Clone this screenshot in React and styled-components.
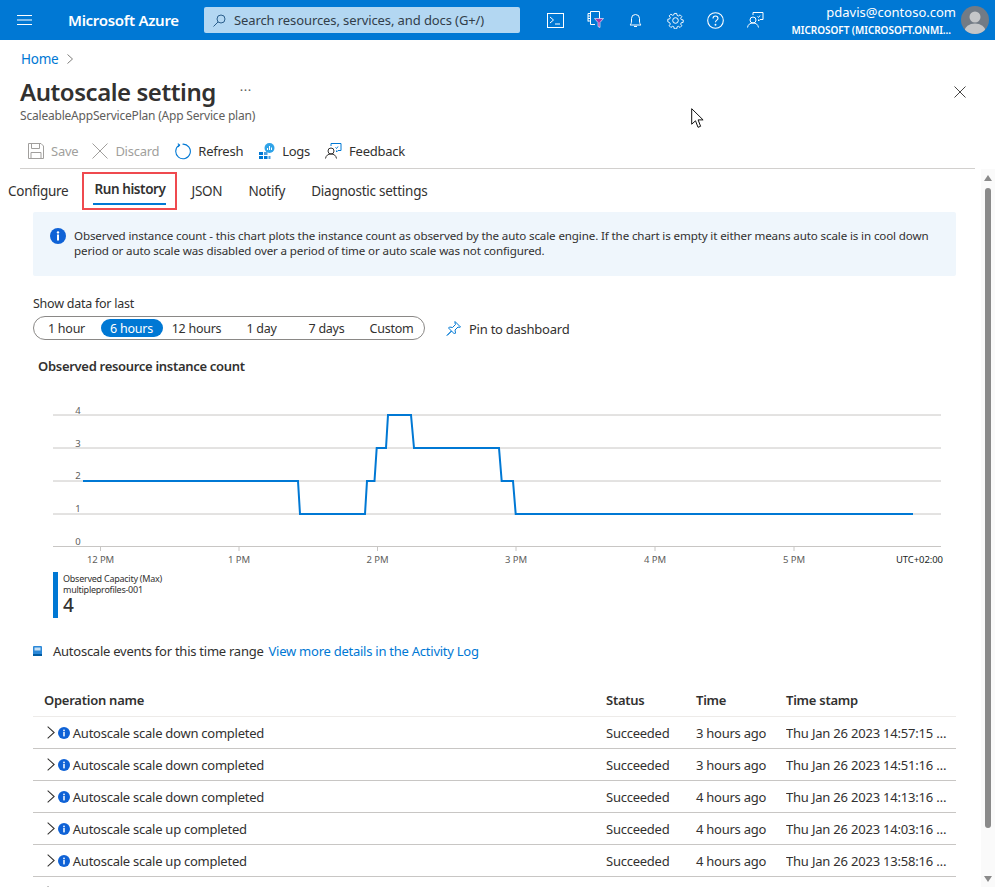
import React from "react";
import styled, { createGlobalStyle } from "styled-components";

const Global = createGlobalStyle`
  html, body { margin: 0; padding: 0; background: #fff; overflow: hidden; }
  body { font-family: "Noto Sans", "Open Sans", sans-serif; font-size: 13px; color: #323130; letter-spacing: -0.25px; }
  * { box-sizing: border-box; }
  svg { display: block; flex: none; }
`;

const Page = styled.div`
  position: relative;
  width: 995px;
  height: 887px;
  overflow: hidden;
`;

const TopBar = styled.header`
  height: 40px;
  background: #0078d4;
  color: #fff;
  display: flex;
  align-items: center;
`;
const Burger = styled.div`
  width: 68px;
  padding-left: 17px;
`;
const Brand = styled.div`
  width: 136px;
  font-size: 15px;
  font-weight: 600;
  letter-spacing: -0.3px;
  white-space: nowrap;
`;
const Search = styled.div`
  width: 316px;
  height: 26px;
  background: #b3d7f2;
  border-radius: 2px;
  display: flex;
  align-items: center;
  gap: 8px;
  padding-left: 9px;
  color: #323e4a;
  font-size: 13px;
  letter-spacing: -0.1px;
`;
const TopIcons = styled.div`
  display: flex;
  margin-left: 15px;
`;
const TopIcon = styled.div`
  width: 40px;
  height: 40px;
  display: flex;
  align-items: center;
  justify-content: center;
`;
const Account = styled.div`
  margin-left: auto;
  display: flex;
  align-items: center;
  gap: 5px;
  padding-right: 6px;
`;
const AccountText = styled.div`
  text-align: right;
  display: flex;
  flex-direction: column;
`;
const Email = styled.div`
  font-size: 13px;
  line-height: 17px;
  letter-spacing: 0;
`;
const Tenant = styled.div`
  font-size: 10px;
  font-weight: 600;
  line-height: 14px;
  letter-spacing: -0.05px;
  padding-right: 5px;
  margin-top: 2px;
`;

const Head = styled.div`
  padding: 0 20px;
`;
const Crumb = styled.div`
  height: 36px;
  display: flex;
  align-items: center;
  gap: 9px;
  padding-left: 1px;
  padding-top: 1px;
  color: #0078d4;
  font-size: 13.5px;
`;
const TitleRow = styled.div`
  height: 32px;
  display: flex;
  align-items: center;
  justify-content: space-between;
  padding-right: 9px;
`;
const TitleGroup = styled.div`
  display: flex;
  align-items: center;
  gap: 24px;
`;
const Title = styled.h1`
  margin: 0;
  font-size: 24px;
  font-weight: 600;
  line-height: 32px;
  letter-spacing: -0.45px;
  color: #323130;
`;
const More = styled.span`
  font-size: 13px;
  letter-spacing: 0.5px;
  line-height: 13px;
  margin-top: -3px;
  color: #605e5c;
`;
const Subtitle = styled.div`
  font-size: 12px;
  line-height: 16px;
  color: #605e5c;
  letter-spacing: -0.2px;
`;
const Toolbar = styled.div`
  margin-top: 10px;
  height: 35px;
  border-bottom: 1px solid #d2d0ce;
  margin-right: 0;
  display: flex;
  align-items: center;
  padding: 0 0 0 8px;
`;
const ToolButton = styled.div`
  display: flex;
  align-items: center;
  gap: ${(p) => p.$gap || 7}px;
  margin-right: ${(p) => p.$mr || 0}px;
  white-space: nowrap;
  color: ${(p) => (p.$off ? "#a19f9d" : "#323130")};
`;

const Content = styled.div`
  display: flex;
  height: 718px;
`;
const Main = styled.main`
  width: 981px;
  padding-top: 3px;
  overflow: hidden;
`;
const Tabs = styled.nav`
  height: 38px;
  display: flex;
  padding-left: 8px;
  align-items: stretch;
`;
const Tab = styled.div`
  display: flex;
  align-items: center;
  font-size: 13.5px;
  white-space: nowrap;
  margin-right: ${(p) => p.$mr}px;
`;
const ActiveTab = styled.div`
  width: 95px;
  margin-right: 14px;
  border: 2px solid #ef4a4f;
  display: flex;
  justify-content: center;
  padding-top: 5px;
`;
const ActiveLabel = styled.div`
  height: 26px;
  width: 73px;
  border-bottom: 2px solid #0078d4;
  font-size: 13.5px;
  font-weight: 600;
  text-align: center;
  white-space: nowrap;
  line-height: 20px;
  letter-spacing: -0.4px;
  color: #323130;
`;
const Section = styled.div`
  margin: 0 25px 0 33px;
`;
const InfoBox = styled.div`
  margin-top: 2px;
  height: 64px;
  background: #eff6fc;
  display: flex;
  padding: 16px 18px 0 17px;
  gap: 8px;
  border-radius: 2px;
`;
const InfoText = styled.div`
  font-size: 11.6px;
  line-height: 15px;
  letter-spacing: -0.13px;
  color: #323130;
`;
const RangeLabel = styled.div`
  margin-top: 20px;
  line-height: 16px;
  font-size: 12.5px;
`;
const RangeRow = styled.div`
  margin-top: 4px;
  display: flex;
  align-items: center;
  gap: 19px;
`;
const Pill = styled.div`
  width: 392px;
  height: 24px;
  border: 1px solid #8a8886;
  border-radius: 12px;
  display: grid;
  grid-template-columns: repeat(6, 65px);
  align-items: center;
`;
const RangeItem = styled.div`
  height: 18px;
  margin: 0 1.5px;
  border-radius: 9px;
  display: flex;
  align-items: center;
  justify-content: center;
  font-size: 12.5px;
  white-space: nowrap;
  background: ${(p) => (p.$active ? "#0078d4" : "transparent")};
  color: ${(p) => (p.$active ? "#fff" : "#323130")};
`;
const PinButton = styled.div`
  display: flex;
  align-items: center;
  gap: 7px;
  margin-top: 1px;
`;
const ChartTitle = styled.div`
  margin: 17px 0 0 5px;
  font-weight: 600;
  line-height: 18px;
  font-size: 13px;
  letter-spacing: -0.3px;
`;
const ChartWrap = styled.div`
  margin: 21px 0 0 -3px;
  width: 915px;
  height: 170px;
`;
const AxisText = styled.text`
  font-family: "Noto Sans", sans-serif;
  font-size: 9.5px;
  letter-spacing: -0.1px;
  fill: ${(p) => p.$fill || "#605e5c"};
`;
const Legend = styled.div`
  margin: 6px 0 0 20px;
  height: 46px;
  border-left: 5px solid #0078d4;
  padding-left: 5px;
`;
const LegendLine = styled.div`
  font-size: 9px;
  line-height: 11px;
  letter-spacing: -0.25px;
  color: #323130;
  padding-top: 1px;
  height: 11px;
`;
const LegendValue = styled.div`
  font-size: 19px;
  line-height: 24px;
  margin-top: -1px;
  font-weight: 500;
  letter-spacing: 0;
`;
const EventsRow = styled.div`
  margin-top: 24px;
  display: flex;
  align-items: center;
  line-height: 18px;
`;
const EventsIcon = styled.div`
  width: 20px;
  padding-top: 0;
`;
const EventsLink = styled.span`
  color: #0078d4;
  margin-left: 5px;
`;
const TableGrid = styled.div`
  margin-top: 23px;
  overflow: hidden;
`;
const Row = styled.div`
  display: grid;
  grid-template-columns: 573px 90px 90px 1fr;
  align-items: center;
  height: ${(p) => (p.$head ? 34 : 32)}px;
  border-bottom: 1px solid ${(p) => (p.$head ? "#edebe9" : "#c8c6c4")};
  font-weight: ${(p) => (p.$head ? 600 : 400)};
  white-space: nowrap;
`;
const NameCell = styled.div`
  display: flex;
  align-items: center;
  padding-left: ${(p) => (p.$head ? 11 : 14)}px;
  gap: ${(p) => (p.$head ? 0 : 3)}px;
`;
const StampCell = styled.div`
  overflow: hidden;
  text-overflow: ellipsis;
  letter-spacing: -0.2px;
  padding-right: 4px;
`;

const Scrollbar = styled.aside`
  width: 14px;
  background: #fafafa;
  display: flex;
  flex-direction: column;
  align-items: center;
  padding: 6px 0 5px;
`;
const ScrollThumb = styled.div`
  width: 6px;
  height: 640px;
  margin-top: 7px;
  border-radius: 3px;
  background: #8a8a8a;
`;
const ScrollEnd = styled.div`
  margin-top: auto;
`;
const Cursor = styled.div`
  position: absolute;
  left: 691px;
  top: 108px;
`;

const Hamburger = () => (
  <svg width="15" height="12" viewBox="0 0 15 12" stroke="#fff" strokeWidth="1.2"><path d="M0 1.5h15M0 6h15M0 10.5h15" /></svg>
);
const SearchIcon = () => (
  <svg width="13" height="13" viewBox="0 0 13 13" fill="none" stroke="#2b5f8c" strokeWidth="1"><circle cx="8" cy="5" r="4" /><path d="M5 8l-4.5 4.5" /></svg>
);
const ConsoleIcon = () => (
  <svg width="17" height="15" viewBox="0 0 17 15" fill="none" stroke="#fff" strokeWidth="1"><rect x=".5" y=".5" width="16" height="14" /><path d="M3 4l3.5 3L3 10M8 11h5" /></svg>
);
const FilterBookIcon = () => (
  <svg width="17" height="18" viewBox="0 0 17 18" fill="none"><path d="M3.5.5h9v7M8 13.5H3.5V.5M1 2.5h2.500M1 5h2.500M1 7.500h2.500M1 10h2.500M1 2.500v8" stroke="#fff" strokeWidth="1" /><path d="M7.500 7.500h9l-3.500 4v5l-2-1v-4z" fill="#a33ba8" stroke="#fff" strokeWidth=".6" /></svg>
);
const BellIcon = () => (
  <svg width="13" height="15" viewBox="0 0 13 15" fill="none" stroke="#fff" strokeWidth="1"><path d="M1 12h11c-1-1-1.500-2-1.500-4V5.500a4 4 0 00-8 0V8C2.500 10 2 11 1 12zM5 13.500h3" /></svg>
);
const GearIcon = () => (
  <svg width="17" height="17" viewBox="0 0 17 17" fill="none" stroke="#fff" strokeWidth="1"><circle cx="8.500" cy="8.500" r="2.800" /><path d="M7.200 1h2.600l.4 2.100 1.400.6 1.800-1.200 1.800 1.800-1.200 1.800.6 1.400 2.100.4v2.600l-2.100.4-.6 1.400 1.200 1.800-1.800 1.800-1.800-1.200-1.400.6-.4 2.100H7.200l-.4-2.100-1.400-.6-1.800 1.200-1.800-1.800 1.200-1.800-.6-1.400L.3 9.800V7.200l2.100-.4.6-1.400L1.800 3.600l1.800-1.800 1.800 1.200 1.400-.6z" transform="translate(.5 .5) scale(.94)" /></svg>
);
const HelpIcon = () => (
  <svg width="17" height="17" viewBox="0 0 17 17" fill="none" stroke="#fff" strokeWidth="1.100"><circle cx="8.500" cy="8.500" r="7.800" /><path d="M6 6.500a2.500 2.500 0 115 0c0 1.700-2.500 1.700-2.500 3.700" /><circle cx="8.500" cy="12.700" r=".4" fill="#fff" /></svg>
);
const FeedbackIcon = ({ color = "#fff", acc }) => (
  <svg width="17" height="16" viewBox="0 0 17 16" fill="none" stroke={color} strokeWidth="1"><circle cx="6" cy="8" r="3" /><path d="M.5 15.500c.5-3 2.500-4.500 5.500-4.500s5 1.500 5.500 4.500" /><path d="M6 3V.5h10v7h-3l-1.500 1.500V7.500" stroke={acc || color} /><path d="M13 3.500l-1.500 2-1-1" stroke={acc || color} /></svg>
);
const Avatar = () => (
  <svg width="28" height="28" viewBox="0 0 28 28"><defs><clipPath id="av"><circle cx="14" cy="14" r="14" /></clipPath></defs><g clipPath="url(#av)"><rect width="28" height="28" fill="#727b85" /><circle cx="14" cy="11" r="5.500" fill="#c4c6c8" /><ellipse cx="14" cy="25" rx="10.500" ry="7.500" fill="#c4c6c8" /></g></svg>
);
const Chevron = ({ size = 10, color = "#605e5c" }) => (
  <svg width={size * 0.6} height={size} viewBox="0 0 6 10" fill="none" stroke={color} strokeWidth=".8"><path d="M.5.500L5.500 5 .5 9.500" /></svg>
);
const Close = () => (
  <svg width="12" height="12" viewBox="0 0 12 12" stroke="#323130" strokeWidth=".9"><path d="M.5.500l11 11M11.500.500l-11 11" /></svg>
);
const SaveIcon = () => (
  <svg width="16" height="16" viewBox="0 0 16 16" fill="none" stroke="#a19f9d" strokeWidth="1"><path d="M.5.500h12.500l2.500 2.500v12.500H.500z" /><path d="M3.500.500v5h8v-5M3 15.500V9.500h10v6" /></svg>
);
const XIcon = () => (
  <svg width="16" height="16" viewBox="0 0 16 16" stroke="#a19f9d" strokeWidth="1"><path d="M.5.500l15 15M15.500.500l-15 15" /></svg>
);
const RefreshIcon = () => (
  <svg width="17" height="17" viewBox="0 0 17 17" fill="none" stroke="#0078d4" strokeWidth="1.100"><path d="M5.500 2.100A7.300 7.300 0 108.500 1.200" /><path d="M3.800.6l1.800 1.500-1.500 1.900" /></svg>
);
const LogsIcon = () => (
  <svg width="16" height="16" viewBox="0 0 16 16"><rect x="0" y="9" width="4" height="3" fill="#0078d4" /><rect x="0" y="13" width="4" height="3" fill="#0078d4" /><rect x="5" y="9" width="3.500" height="3" fill="#50a0e0" /><rect x="5" y="13" width="3.500" height="3" fill="#0078d4" /><rect x="9.500" y="13" width="2" height="3" fill="#50a0e0" /><circle cx="10.500" cy="5" r="5" fill="#2fa3e8" /><path d="M8.500 7V5M10.500 7V3M12.500 7V4.500" stroke="#fff" strokeWidth="1" /></svg>
);
const InfoIcon = ({ size = 16, color = "#0f62d6" }) => (
  <svg width={size} height={size} viewBox="0 0 16 16"><circle cx="8" cy="8" r="8" fill={color} /><rect x="7" y="6.500" width="2" height="6" fill="#fff" /><circle cx="8" cy="4.400" r="1.200" fill="#fff" /></svg>
);
const PinIcon = () => (
  <svg width="18" height="18" viewBox="0 0 18 18" fill="none" stroke="#0078d4" strokeWidth="1"><path d="M11 1.500l5.500 5.500-1 .5-1.500-.5-3 3 .5 3-1 1-3-3-4.500 4.500 4.500-4.500-3-3 1-1 3 .5 3-3-.5-1.500z" /></svg>
);
const BookIcon = () => (
  <svg width="9" height="10" viewBox="0 0 9 10"><rect width="9" height="10" rx="1" fill="#2b88d8" /><rect x="1.500" y="1.500" width="6" height="3" fill="#c7e0f4" /><rect y="8" width="9" height="2" fill="#005ba1" /></svg>
);
const Arrow = ({ up }) => (
  <svg width="8" height="6" viewBox="0 0 8 6"><path d={up ? "M4 0l4 6H0z" : "M0 0h8L4 6z"} fill="#8a8a8a" /></svg>
);
const CursorIcon = () => (
  <svg width="14" height="21" viewBox="0 0 14 21"><path d="M.7.700v15.500l3.800-3.400 2.500 6.500 2.600-1-2.500-6.400h5z" fill="#fff" stroke="#111" strokeWidth="1" /></svg>
);

const series = "83,480 298,480 300,513 365,513 367,480 374.500,480 376.700,447 386,447 388,414 411,414 414,447 499,447 501.700,480 513,480 515.700,513 913,513";
const gridY = [414, 447, 480, 513, 545.5];
const yLabels = [["4", 413], ["3", 446], ["2", 478], ["1", 511], ["0", 544]];
const xLabels = [["12 PM", 100.5], ["1 PM", 239], ["2 PM", 377.5], ["3 PM", 516], ["4 PM", 655], ["5 PM", 794]];

const Chart = () => (
  <svg width="915" height="170" viewBox="30 395 915 170">
    {gridY.map((y) => (
      <line key={y} x1="53" x2="941" y1={y} y2={y} stroke="#c8c6c4" strokeWidth="1" />
    ))}
    {xLabels.map(([l, x]) => (
      <g key={l}>
        <line x1={x} x2={x} y1="545" y2="550" stroke="#c8c6c4" />
        <AxisText x={x} y="562" textAnchor="middle">{l}</AxisText>
      </g>
    ))}
    {yLabels.map(([l, y]) => (
      <AxisText key={l} x="78" y={y} textAnchor="middle">{l}</AxisText>
    ))}
    <AxisText x="896" y="562" $fill="#201f1e">UTC+02:00</AxisText>
    <polyline points={series} fill="none" stroke="#0078d4" strokeWidth="2" />
  </svg>
);

const ranges = ["1 hour", "6 hours", "12 hours", "1 day", "7 days", "Custom"];
const events = [
  ["Autoscale scale down completed", "3 hours ago", "Thu Jan 26 2023 14:57:15 GMT+0200"],
  ["Autoscale scale down completed", "3 hours ago", "Thu Jan 26 2023 14:51:16 GMT+0200"],
  ["Autoscale scale down completed", "4 hours ago", "Thu Jan 26 2023 14:13:16 GMT+0200"],
  ["Autoscale scale up completed", "4 hours ago", "Thu Jan 26 2023 14:03:16 GMT+0200"],
  ["Autoscale scale up completed", "4 hours ago", "Thu Jan 26 2023 13:58:16 GMT+0200"],
  ["Autoscale scale up completed", "4 hours ago", "Thu Jan 26 2023 13:54:14 GMT+0200"],
];

export default function App() {
  return (
    <Page>
      <Global />
      <TopBar>
        <Burger><Hamburger /></Burger>
        <Brand>Microsoft Azure</Brand>
        <Search><SearchIcon />Search resources, services, and docs (G+/)</Search>
        <TopIcons>
          <TopIcon><ConsoleIcon /></TopIcon>
          <TopIcon><FilterBookIcon /></TopIcon>
          <TopIcon><BellIcon /></TopIcon>
          <TopIcon><GearIcon /></TopIcon>
          <TopIcon><HelpIcon /></TopIcon>
          <TopIcon><FeedbackIcon /></TopIcon>
        </TopIcons>
        <Account>
          <AccountText>
            <Email>pdavis@contoso.com</Email>
            <Tenant>MICROSOFT (MICROSOFT.ONMI...</Tenant>
          </AccountText>
          <Avatar />
        </Account>
      </TopBar>
      <Head>
        <Crumb>Home <Chevron /></Crumb>
        <TitleRow>
          <TitleGroup>
            <Title>Autoscale setting</Title>
            <More>···</More>
          </TitleGroup>
          <Close />
        </TitleRow>
        <Subtitle>ScaleableAppServicePlan (App Service plan)</Subtitle>
        <Toolbar>
          <ToolButton $off $mr={14}><SaveIcon />Save</ToolButton>
          <ToolButton $off $mr={15}><XIcon />Discard</ToolButton>
          <ToolButton $mr={16}><RefreshIcon />Refresh</ToolButton>
          <ToolButton $mr={15}><LogsIcon />Logs</ToolButton>
          <ToolButton><FeedbackIcon color="#323130" acc="#0078d4" />Feedback</ToolButton>
        </Toolbar>
      </Head>
      <Content>
        <Main>
          <Tabs>
            <Tab $mr={14}>Configure</Tab>
            <ActiveTab><ActiveLabel>Run history</ActiveLabel></ActiveTab>
            <Tab $mr={26}>JSON</Tab>
            <Tab $mr={26}>Notify</Tab>
            <Tab $mr={0}>Diagnostic settings</Tab>
          </Tabs>
          <Section>
            <InfoBox>
              <InfoIcon size={16} />
              <InfoText>Observed instance count - this chart plots the instance count as observed by the auto scale engine. If the chart is empty it either means auto scale is in cool down period or auto scale was disabled over a period of time or auto scale was not configured.</InfoText>
            </InfoBox>
            <RangeLabel>Show data for last</RangeLabel>
            <RangeRow>
              <Pill>
                {ranges.map((r) => (
                  <RangeItem key={r} $active={r === "6 hours"}>{r}</RangeItem>
                ))}
              </Pill>
              <PinButton><PinIcon />Pin to dashboard</PinButton>
            </RangeRow>
            <ChartTitle>Observed resource instance count</ChartTitle>
            <ChartWrap><Chart /></ChartWrap>
            <Legend>
              <LegendLine>Observed Capacity (Max)</LegendLine>
              <LegendLine>multipleprofiles-001</LegendLine>
              <LegendValue>4</LegendValue>
            </Legend>
            <EventsRow>
              <EventsIcon><BookIcon /></EventsIcon>
              Autoscale events for this time range
              <EventsLink>View more details in the Activity Log</EventsLink>
            </EventsRow>
            <TableGrid>
              <Row $head>
                <NameCell $head>Operation name</NameCell>
                <div>Status</div>
                <div>Time</div>
                <div>Time stamp</div>
              </Row>
              {events.map(([name, time, stamp], i) => (
                <Row key={i}>
                  <NameCell><Chevron size={13} color="#323130" /><InfoIcon size={12} />{name}</NameCell>
                  <div>Succeeded</div>
                  <div>{time}</div>
                  <StampCell>{stamp}</StampCell>
                </Row>
              ))}
            </TableGrid>
          </Section>
        </Main>
        <Scrollbar>
          <Arrow up />
          <ScrollThumb />
          <ScrollEnd><Arrow /></ScrollEnd>
        </Scrollbar>
      </Content>
      <Cursor><CursorIcon /></Cursor>
    </Page>
  );
}
